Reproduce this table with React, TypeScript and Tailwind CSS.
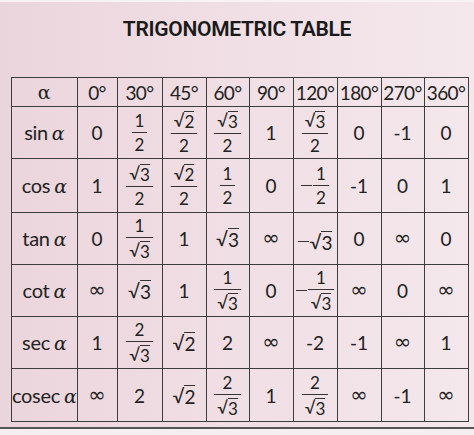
import type { ReactNode } from 'react';

const cellFont = { fontFamily: 'Lato, "Open Sans", sans-serif' };

function Sq({ children }: { children: ReactNode }) {
  return (
    <span className="inline-flex items-start leading-none">
      <span className="mt-[1px]">√</span>
      <span className="border-t-[1.5px] border-[#333] pt-[1px] leading-none">{children}</span>
    </span>
  );
}

function Frac({ n, d }: { n: ReactNode; d: ReactNode }) {
  return (
    <span className="inline-flex flex-col items-center align-middle text-[17px] leading-none">
      <span className="px-[3px] pb-[3px]">{n}</span>
      <span className="w-full border-t-[1.5px] border-[#333]" />
      <span className="px-[3px] pt-[3px]">{d}</span>
    </span>
  );
}

function Neg({ children }: { children: ReactNode }) {
  return (
    <span className="inline-flex items-center">
      <span className="mr-[1px] h-[1.5px] w-[11px] bg-[#333]" />
      {children}
    </span>
  );
}

function Label({ fn }: { fn: string }) {
  return (
    <span className="inline-flex items-baseline text-[20px] tracking-[-0.3px]">
      <span>{fn}</span>
      <span className="ml-[4px] italic" style={{ fontFamily: '"DejaVu Serif", serif', fontSize: 19 }}>
        α
      </span>
    </span>
  );
}

const r3 = <Sq>3</Sq>;
const r2 = <Sq>2</Sq>;
const inf = (
  <span className="text-[21px]" style={{ fontFamily: '"DejaVu Sans", sans-serif' }}>
    ∞
  </span>
);

const headers = ['0°', '30°', '45°', '60°', '90°', '120°', '180°', '270°', '360°'];
const widths = [65, 40, 45, 44, 43, 44, 44, 44, 43, 44];
const heights = [52, 54, 52, 52, 52, 53];

const rows: { fn: string; vals: ReactNode[] }[] = [
  {
    fn: 'sin',
    vals: ['0', <Frac n="1" d="2" />, <Frac n={r2} d="2" />, <Frac n={r3} d="2" />, '1', <Frac n={r3} d="2" />, '0', '-1', '0'],
  },
  {
    fn: 'cos',
    vals: ['1', <Frac n={r3} d="2" />, <Frac n={r2} d="2" />, <Frac n="1" d="2" />, '0', <Neg><Frac n="1" d="2" /></Neg>, '-1', '0', '1'],
  },
  {
    fn: 'tan',
    vals: ['0', <Frac n="1" d={r3} />, '1', r3, inf, <Neg>{r3}</Neg>, '0', inf, '0'],
  },
  {
    fn: 'cot',
    vals: [inf, r3, '1', <Frac n="1" d={r3} />, '0', <Neg><Frac n="1" d={r3} /></Neg>, inf, '0', inf],
  },
  {
    fn: 'sec',
    vals: ['1', <Frac n="2" d={r3} />, r2, '2', inf, '-2', '-1', inf, '1'],
  },
  {
    fn: 'cosec',
    vals: [inf, '2', r2, <Frac n="2" d={r3} />, '1', <Frac n="2" d={r3} />, inf, '-1', inf],
  },
];

export default function App() {
  return (
    <div className="relative h-[435px] w-[474px] overflow-hidden bg-gradient-to-r from-[#ebd5dc] via-[#f0dfe4] to-[#f4e8ec] text-[#222]">
      <div className="h-[2px] w-full bg-[#f7f3f4]" />
      <h1
        className="pt-[14px] text-center text-[21px] font-semibold leading-[26px] tracking-[-0.3px] text-[#1a1a1a]"
        style={{ fontFamily: 'Roboto, "Liberation Sans", sans-serif' }}
      >
        TRIGONOMETRIC TABLE
      </h1>
      <div className="pl-[11px] pt-[35px]">
        <table className="table-fixed border-collapse text-[19px] leading-none" style={cellFont}>
          <colgroup>
            {widths.map((w, i) => (
              <col key={i} style={{ width: w }} />
            ))}
          </colgroup>
          <tbody>
            <tr className="h-[29px]">
              <td className="border-[1.5px] border-[#3d3d3d] text-center align-middle">
                <span style={{ fontFamily: '"DejaVu Serif", serif', fontSize: 19 }}>α</span>
              </td>
              {headers.map((h) => (
                <td
                  key={h}
                  className="whitespace-nowrap border-[1.5px] border-[#3d3d3d] p-0 text-center align-middle tracking-[-0.6px]"
                >
                  {h}
                </td>
              ))}
            </tr>
            {rows.map((row, ri) => (
              <tr key={row.fn} style={{ height: heights[ri] }}>
                <td className="whitespace-nowrap border-[1.5px] border-[#3d3d3d] p-0 text-center align-middle">
                  <Label fn={row.fn} />
                </td>
                {row.vals.map((v, ci) => (
                  <td key={ci} className="whitespace-nowrap border-[1.5px] border-[#3d3d3d] p-0 text-center align-middle">
                    {v}
                  </td>
                ))}
              </tr>
            ))}
          </tbody>
        </table>
      </div>
      <div className="mt-[5px] h-[1.5px] w-full bg-[#555]" />
      <div className="h-full w-full bg-[#f6eff1]" />
    </div>
  );
}
